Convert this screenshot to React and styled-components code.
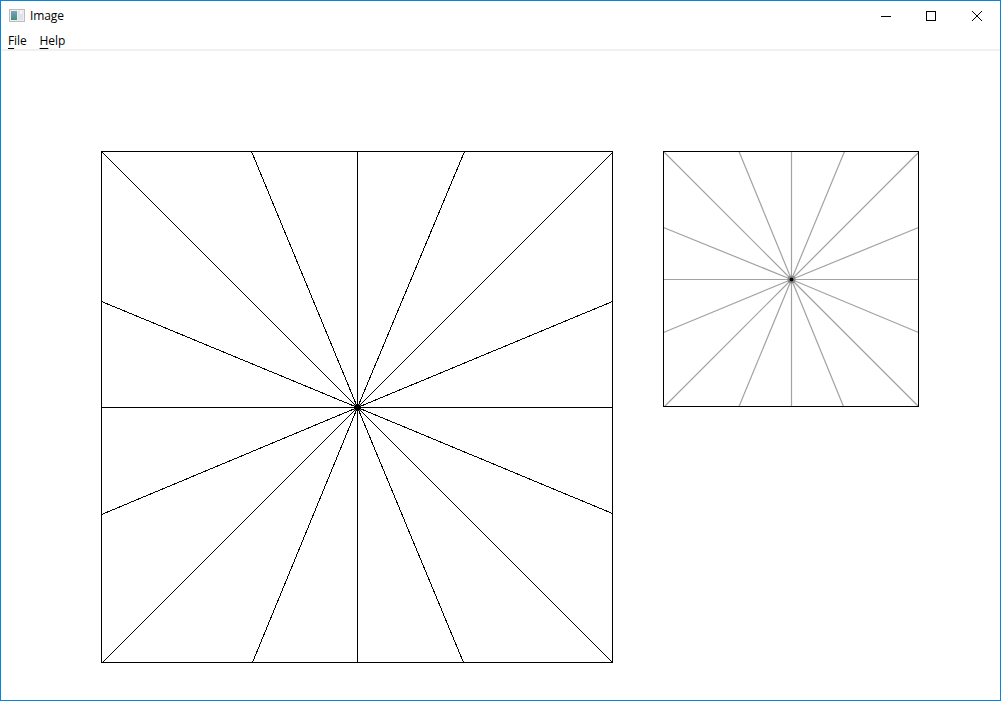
import React from 'react';
import styled, { createGlobalStyle } from 'styled-components';

const GlobalStyle = createGlobalStyle`
  html, body {
    margin: 0;
    padding: 0;
    background: #fff;
    overflow: hidden;
  }
`;

const Window = styled.div`
  box-sizing: border-box;
  width: 1001px;
  height: 701px;
  border: 1px solid #0c85d9;
  background: #fff;
  font-family: "Open Sans", "Noto Sans", sans-serif;
  font-size: 12px;
  letter-spacing: -0.1px;
  color: #000;
  display: flex;
  flex-direction: column;
`;

const TitleBar = styled.div`
  height: 29px;
  display: flex;
  align-items: center;
  padding-left: 8px;
`;

const TitleText = styled.span`
  flex: 1;
  line-height: 29px;
  margin-left: 5px;
`;

const WindowButton = styled.button`
  width: ${(p) => p.$width || 46}px;
  height: 29px;
  border: 0;
  padding: 0;
  background: none;
  display: flex;
  align-items: center;
  justify-content: center;
`;

const MenuBar = styled.div`
  height: 19px;
  display: flex;
  padding-left: 7px;
  gap: 13px;
  border-bottom: 2px solid #f0f0f0;
  line-height: 22px;
`;

const MenuItem = styled.span`
  u {
    text-decoration-thickness: 1px;
    text-decoration-skip-ink: none;
    text-underline-offset: 3px;
  }
`;

const Canvas = styled.div`
  flex: 1;
  display: flex;
  align-items: flex-start;
  gap: 50px;
  padding: 100px 0 0 100px;
`;

const Figure = styled.svg`
  display: block;
  flex: none;
`;

const bigRays = [
  [150, 0], [256, 0], [363, 0], [511, 1],
  [511, 150], [511, 256], [511, 362], [511, 511],
  [362, 511], [256, 511], [151, 511], [1, 511],
  [0, 363], [0, 256], [0, 150], [0, 0],
];

const smallRays = [
  [75.5, 0], [128, 0], [181, 0], [255, 1],
  [255, 76], [255, 128], [255, 181], [255, 255],
  [180, 255], [128, 255], [75.5, 255], [1, 255],
  [0, 181], [0, 128], [0, 76], [0, 0],
];

function AppIcon() {
  return (
    <svg width="16" height="16" viewBox="0 0 16 16">
      <defs>
        <linearGradient id="panel" x1="0" y1="0" x2="0" y2="1">
          <stop offset="0" stopColor="#7f9fc0" />
          <stop offset="1" stopColor="#3f8f78" />
        </linearGradient>
      </defs>
      <rect x="0" y="1" width="16" height="13" fill="#bdbdbd" />
      <rect x="1" y="2" width="14" height="11" fill="#eeeeee" />
      <rect x="2" y="3" width="6" height="9" fill="url(#panel)" />
      <rect x="9" y="3" width="5" height="9" fill="#dbe5e8" />
      <rect x="11" y="3" width="2" height="3" fill="#f8f8f8" />
    </svg>
  );
}

function Sunburst({ size, rays, stroke, crisp }) {
  const c = size === 512 ? 256 : 128;
  return (
    <Figure width={size} height={size} viewBox={`0 0 ${size} ${size}`}>
      <g
        stroke={stroke}
        strokeWidth={crisp ? 1 : 1.2}
        shapeRendering={crisp ? 'crispEdges' : 'auto'}
      >
        {rays.map(([x, y], i) => (
          <line key={i} x1={c + 0.5} y1={c + 0.5} x2={x + 0.5} y2={y + 0.5} />
        ))}
      </g>
      {!crisp && <circle cx={c + 0.5} cy={c + 0.5} r="4" fill="#8a8a8a" />}
      <circle cx={c + 0.5} cy={c + 0.5} r={crisp ? 3.5 : 2} fill="#000" />
      <rect
        x="0.5"
        y="0.5"
        width={size - 1}
        height={size - 1}
        fill="none"
        stroke="#000"
        shapeRendering="crispEdges"
      />
    </Figure>
  );
}

export default function App() {
  return (
    <Window>
      <GlobalStyle />
      <TitleBar>
        <AppIcon />
        <TitleText>Image</TitleText>
        <WindowButton $width={45} aria-label="Minimize">
          <svg width="10" height="10" viewBox="0 0 10 10">
            <path d="M0 5.5H10" stroke="#000" fill="none" />
          </svg>
        </WindowButton>
        <WindowButton aria-label="Maximize">
          <svg width="10" height="10" viewBox="0 0 10 10">
            <rect x="0.5" y="0.5" width="9" height="9" stroke="#000" fill="none" />
          </svg>
        </WindowButton>
        <WindowButton aria-label="Close">
          <svg width="10" height="10" viewBox="0 0 10 10">
            <path d="M0 0L10 10M10 0L0 10" stroke="#000" fill="none" />
          </svg>
        </WindowButton>
      </TitleBar>
      <MenuBar>
        <MenuItem><u>F</u>ile</MenuItem>
        <MenuItem><u>H</u>elp</MenuItem>
      </MenuBar>
      <Canvas>
        <Sunburst size={512} rays={bigRays} stroke="#000" crisp />
        <Sunburst size={256} rays={smallRays} stroke="#a2a2a2" />
      </Canvas>
    </Window>
  );
}
